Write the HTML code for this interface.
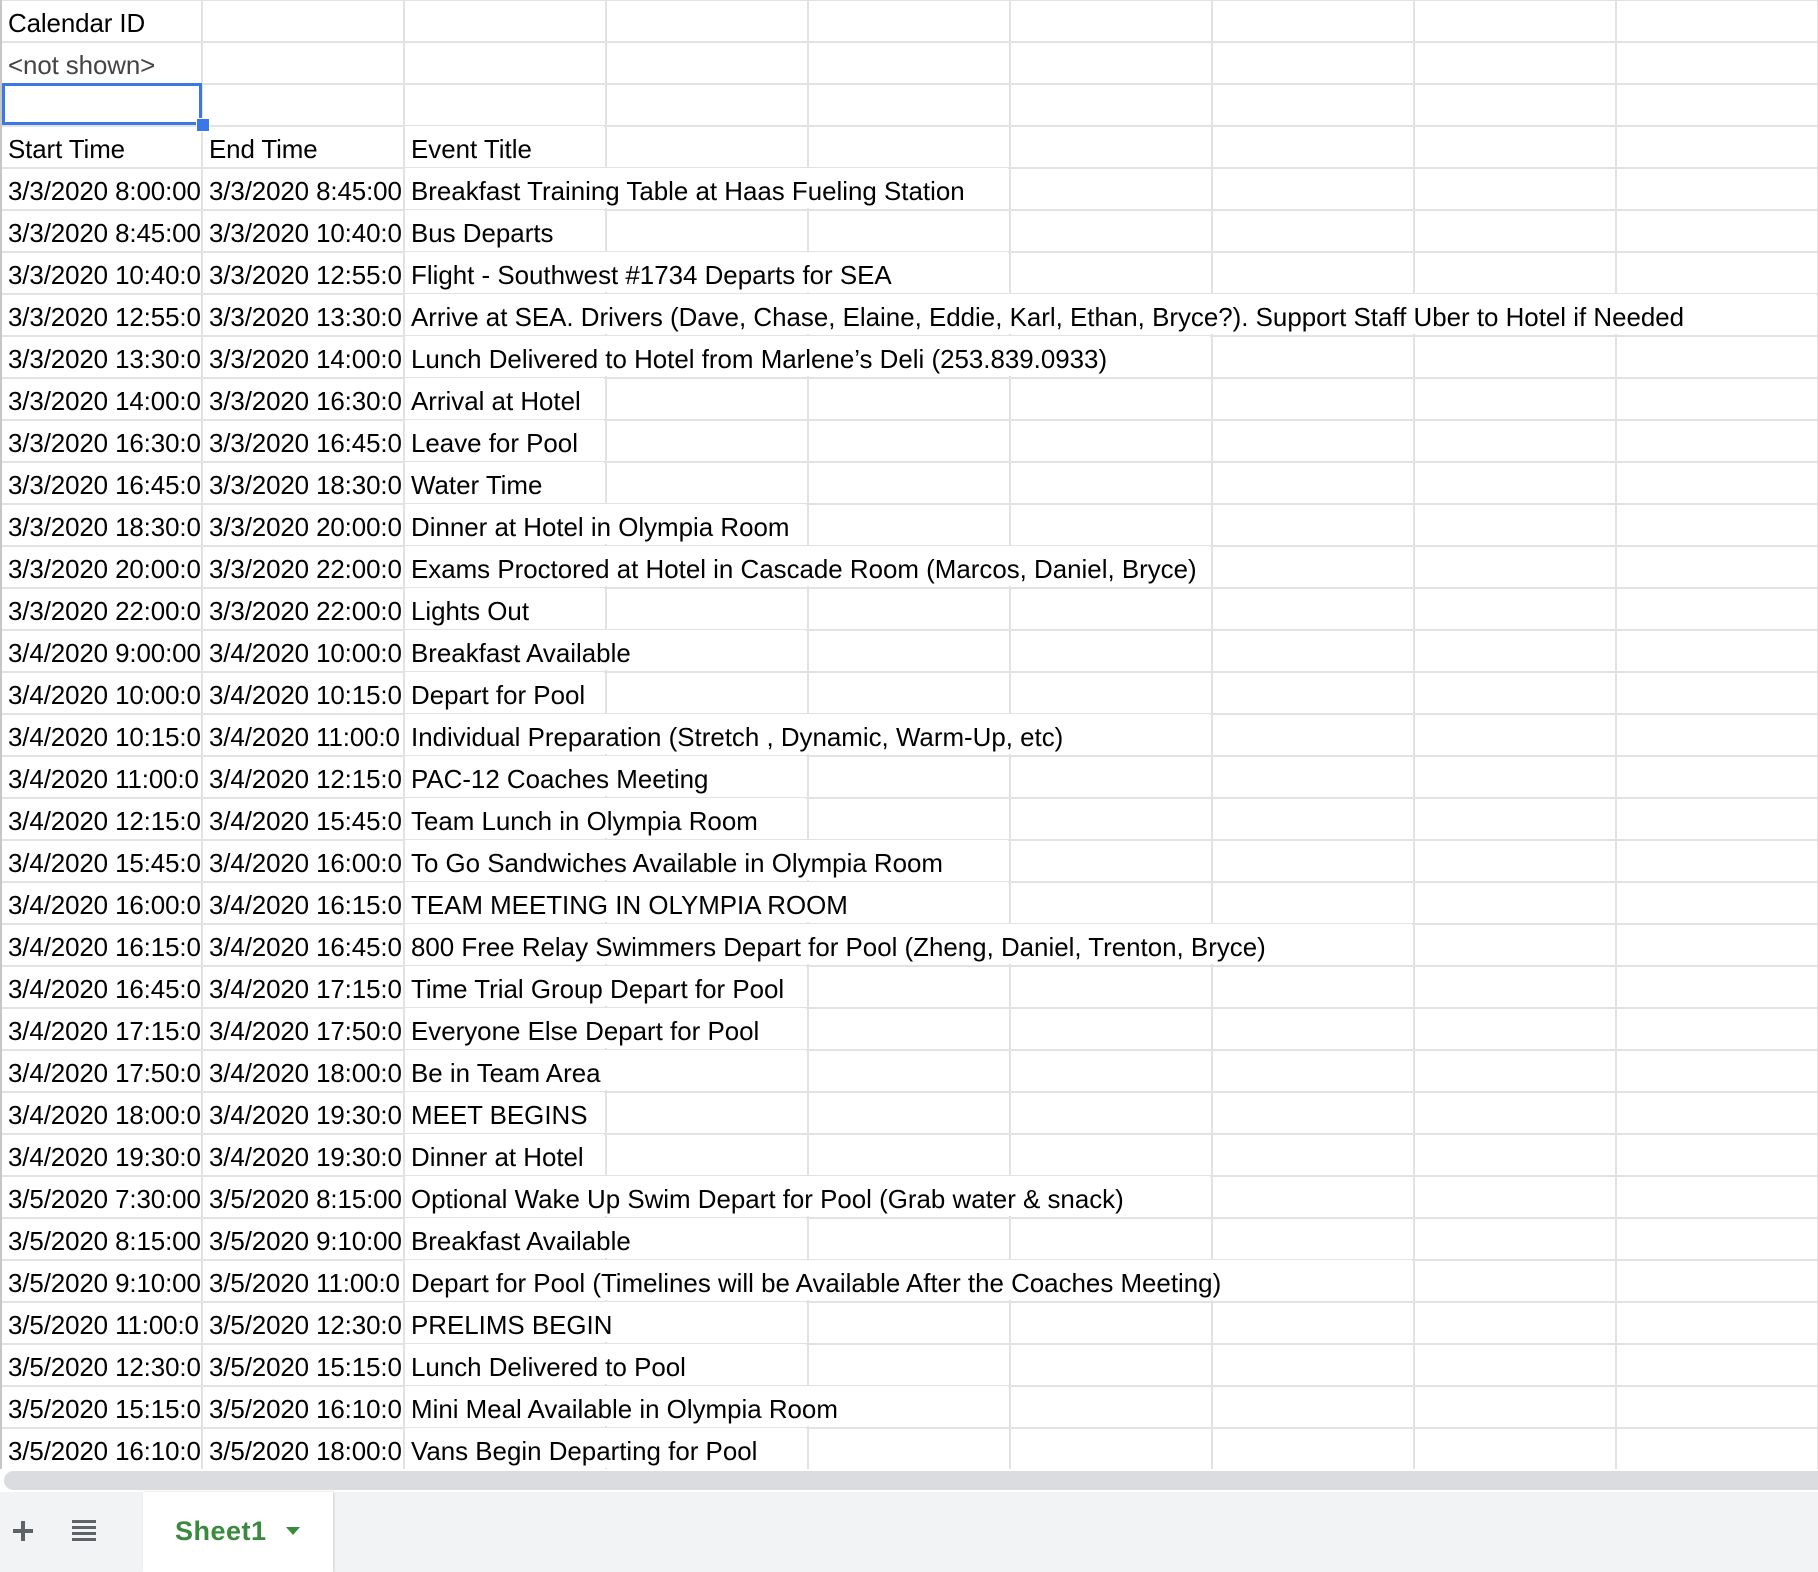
<!DOCTYPE html>
<html><head><meta charset="utf-8"><style>
html,body{margin:0;padding:0;background:#fff;width:1818px;height:1572px;overflow:hidden}
body{position:relative;font-family:"Liberation Sans",Arial,sans-serif}
#grid{position:absolute;left:0;top:0;width:1818px;height:1469px;overflow:hidden;
background-image:linear-gradient(to right,#e2e2e2 2px,transparent 2px),linear-gradient(to bottom,#e2e2e2 2px,transparent 2px);
background-size:202px 42px,202px 42px;background-position:201px 0,0 41px;}
.row{position:absolute;left:0;height:40px;width:1818px}
.c{position:absolute;top:0;height:40px;line-height:40px;font-size:25.9px;color:#000;white-space:nowrap;box-sizing:border-box;padding-top:4px}
.c1{left:2px;width:199px;overflow:hidden;padding-left:6px}
.c2{left:203px;width:198px;overflow:hidden;padding-left:6px;letter-spacing:-0.1px}
.c1{letter-spacing:-0.1px}
.c3{left:405px;background:#fff;padding-left:6px}
#lft{position:absolute;left:0;top:0;width:2px;height:1469px;background:#c6c6c6}
#sel{position:absolute;left:2px;top:83px;width:200px;height:42px;border:3px solid #3b78e7;box-sizing:border-box}
#hdl{position:absolute;left:196px;top:118px;width:12px;height:12px;background:#3b78e7;border:1px solid #fff}
#sb{position:absolute;left:0;top:1469px;width:1818px;height:23px;background:#fff}
#sbt{position:absolute;left:4px;top:1471px;width:1830px;height:19px;background:#dadce0;border-radius:10px}
#bar{position:absolute;left:0;top:1492px;width:1818px;height:80px;background:#f1f3f4}
#tab{position:absolute;left:143px;top:1492px;width:190px;height:80px;background:#fff;box-shadow:1px 0 2px #d0d0d0}
#tab span{position:absolute;left:32px;top:24px;font-size:27px;color:#3a8a3e;font-weight:bold;letter-spacing:0.5px}
</style></head><body>
<div id="grid"></div>
<div id="lft"></div>
<div id="rows"></div>
<div id="sel"></div><div id="hdl"></div>
<div id="sb"></div><div id="sbt"></div>
<div id="bar"></div>
<svg style="position:absolute;left:10px;top:1518px" width="26" height="26"><rect x="11" y="3" width="4" height="20" fill="#5f6368"/><rect x="3" y="11" width="20" height="4" fill="#5f6368"/></svg>
<svg style="position:absolute;left:70px;top:1518px" width="28" height="26"><g fill="#5f6368"><rect x="2" y="2" width="24" height="3"/><rect x="2" y="8" width="24" height="3"/><rect x="2" y="14" width="24" height="3"/><rect x="2" y="20" width="24" height="3"/></g></svg>
<div id="tab"><span>Sheet1</span><svg style="position:absolute;left:143px;top:34px" width="16" height="10"><path d="M0 1 L14 1 L7 9 Z" fill="#3a8a3e"/></svg></div>
<script>
var d=[["Calendar ID","",""],["<not shown>","",""],["","",""],["Start Time","End Time","Event Title"],
["3/3/2020 8:00:00","3/3/2020 8:45:00","Breakfast Training Table at Haas Fueling Station"],
["3/3/2020 8:45:00","3/3/2020 10:40:0","Bus Departs"],
["3/3/2020 10:40:0","3/3/2020 12:55:0","Flight - Southwest #1734 Departs for SEA"],
["3/3/2020 12:55:0","3/3/2020 13:30:0","Arrive at SEA. Drivers (Dave, Chase, Elaine, Eddie, Karl, Ethan, Bryce?). Support Staff Uber to Hotel if Needed"],
["3/3/2020 13:30:0","3/3/2020 14:00:0","Lunch Delivered to Hotel from Marlene’s Deli (253.839.0933)"],
["3/3/2020 14:00:0","3/3/2020 16:30:0","Arrival at Hotel"],
["3/3/2020 16:30:0","3/3/2020 16:45:0","Leave for Pool"],
["3/3/2020 16:45:0","3/3/2020 18:30:0","Water Time"],
["3/3/2020 18:30:0","3/3/2020 20:00:0","Dinner at Hotel in Olympia Room"],
["3/3/2020 20:00:0","3/3/2020 22:00:0","Exams Proctored at Hotel in Cascade Room (Marcos, Daniel, Bryce)"],
["3/3/2020 22:00:0","3/3/2020 22:00:0","Lights Out"],
["3/4/2020 9:00:00","3/4/2020 10:00:0","Breakfast Available"],
["3/4/2020 10:00:0","3/4/2020 10:15:0","Depart for Pool"],
["3/4/2020 10:15:0","3/4/2020 11:00:0","Individual Preparation (Stretch , Dynamic, Warm-Up, etc)"],
["3/4/2020 11:00:0","3/4/2020 12:15:0","PAC-12 Coaches Meeting"],
["3/4/2020 12:15:0","3/4/2020 15:45:0","Team Lunch in Olympia Room"],
["3/4/2020 15:45:0","3/4/2020 16:00:0","To Go Sandwiches Available in Olympia Room"],
["3/4/2020 16:00:0","3/4/2020 16:15:0","TEAM MEETING IN OLYMPIA ROOM"],
["3/4/2020 16:15:0","3/4/2020 16:45:0","800 Free Relay Swimmers Depart for Pool (Zheng, Daniel, Trenton, Bryce)"],
["3/4/2020 16:45:0","3/4/2020 17:15:0","Time Trial Group Depart for Pool"],
["3/4/2020 17:15:0","3/4/2020 17:50:0","Everyone Else Depart for Pool"],
["3/4/2020 17:50:0","3/4/2020 18:00:0","Be in Team Area"],
["3/4/2020 18:00:0","3/4/2020 19:30:0","MEET BEGINS"],
["3/4/2020 19:30:0","3/4/2020 19:30:0","Dinner at Hotel"],
["3/5/2020 7:30:00","3/5/2020 8:15:00","Optional Wake Up Swim Depart for Pool (Grab water & snack)"],
["3/5/2020 8:15:00","3/5/2020 9:10:00","Breakfast Available"],
["3/5/2020 9:10:00","3/5/2020 11:00:0","Depart for Pool (Timelines will be Available After the Coaches Meeting)"],
["3/5/2020 11:00:0","3/5/2020 12:30:0","PRELIMS BEGIN"],
["3/5/2020 12:30:0","3/5/2020 15:15:0","Lunch Delivered to Pool"],
["3/5/2020 15:15:0","3/5/2020 16:10:0","Mini Meal Available in Olympia Room"],
["3/5/2020 16:10:0","3/5/2020 18:00:0","Vans Begin Departing for Pool"]];
var R=document.getElementById('rows');
function esc(s){return s.replace(/&/g,'&amp;').replace(/</g,'&lt;').replace(/>/g,'&gt;');}
d.forEach(function(r,i){
 var row=document.createElement('div');row.className='row';row.style.top=(i*42)+'px';
 var c1='<div class="c c1"'+(i==1?' style="color:#444"':'')+'>'+esc(r[0])+'</div>';
 var c2=r[1]?'<div class="c c2">'+esc(r[1])+'</div>':'';
 var c3=r[2]?'<div class="c c3">'+esc(r[2])+'</div>':'';
 row.innerHTML=c1+c2+c3;R.appendChild(row);
 var e=row.querySelector('.c3');
 if(e){var w=e.offsetWidth+8;var n=Math.ceil(w/202);e.style.width=(n*202-3)+'px';}
});
</script>
</body></html>
